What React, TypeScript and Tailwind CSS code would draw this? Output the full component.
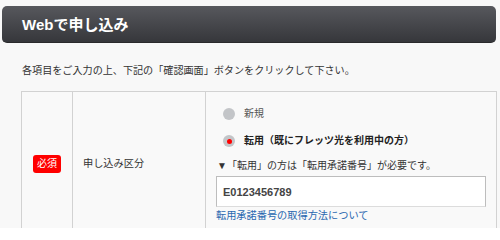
import React, { useState } from "react";

export default function App() {
  const [kind, setKind] = useState<"new" | "transfer">("transfer");
  const [code, setCode] = useState("E0123456789");

  return (
    <div
      className="w-[500px] h-[228px] overflow-hidden bg-[#f8f8f8] text-[#333]"
      style={{ fontFamily: '"Liberation Sans", "Noto Sans CJK JP", sans-serif' }}
    >
      <div className="pt-[6px] pr-[4px] pl-[2px]">
        <div className="h-[37px] rounded-[5px] bg-gradient-to-b from-[#57585d] to-[#36373b] border-b border-[#2a2a2c] flex items-center pl-[20px]">
          <h1 className="text-[15px] font-bold text-white leading-none">Webで申し込み</h1>
        </div>
      </div>

      <p className="mt-[23px] pl-[22px] text-[10.1px] leading-none">
        各項目をご入力の上、下記の「確認画面」ボタンをクリックして下さい。
      </p>

      <div className="mt-[15px] ml-[21px] mr-[3px] border border-[#d2d2d2] grid grid-cols-[51px_133px_1fr] bg-[#f9f9f9]">
        <div className="flex items-center justify-center border-r border-[#d2d2d2]">
          <span className="bg-[#ff0000] text-white text-[10px] leading-none rounded-[3px] w-[28px] h-[18px] flex items-center justify-center">
            必須
          </span>
        </div>
        <div className="flex items-center pl-[10px] border-r border-[#d2d2d2] text-[10.2px]">
          申し込み区分
        </div>
        <div className="pl-[10px] pr-[11px] pt-[15px] pb-[14px]">
          <label className="flex items-center h-[14px] pl-[7px] cursor-pointer" onClick={() => setKind("new")}>
            <span className="w-[12px] h-[12px] rounded-full bg-[#c3c5c8] flex items-center justify-center">
              {kind === "new" && <span className="w-[5px] h-[5px] rounded-full bg-[#ff0000]" />}
            </span>
            <span className={`ml-[9px] text-[10px] leading-none ${kind === "new" ? "font-bold text-[#222]" : "text-[#555]"}`}>
              新規
            </span>
          </label>
          <label className="flex items-center h-[14px] mt-[13px] pl-[7px] cursor-pointer" onClick={() => setKind("transfer")}>
            <span className="w-[12px] h-[12px] rounded-full bg-[#c3c5c8] flex items-center justify-center">
              {kind === "transfer" && <span className="w-[5px] h-[5px] rounded-full bg-[#ff0000]" />}
            </span>
            <span className={`ml-[9px] text-[10px] leading-none ${kind === "transfer" ? "font-bold text-[#222]" : "text-[#555]"}`}>
              転用（既にフレッツ光を利用中の方）
            </span>
          </label>
          <p className="mt-[13px] pl-[1px] text-[10px] leading-none">
            ▼「転用」の方は「転用承諾番号」が必要です。
          </p>
          <input
            value={code}
            onChange={(e) => setCode(e.target.value)}
            className="mt-[5px] block w-[270px] h-[31px] bg-white border border-[#bdbdbd] border-b-[#dcdcdc] px-[6px] text-[11px] font-bold text-[#444] outline-none"
          />
          <a href="#" className="block mt-[4px] text-[10.2px] leading-none text-[#2a68b0]">
            転用承諾番号の取得方法について
          </a>
        </div>
      </div>
    </div>
  );
}
